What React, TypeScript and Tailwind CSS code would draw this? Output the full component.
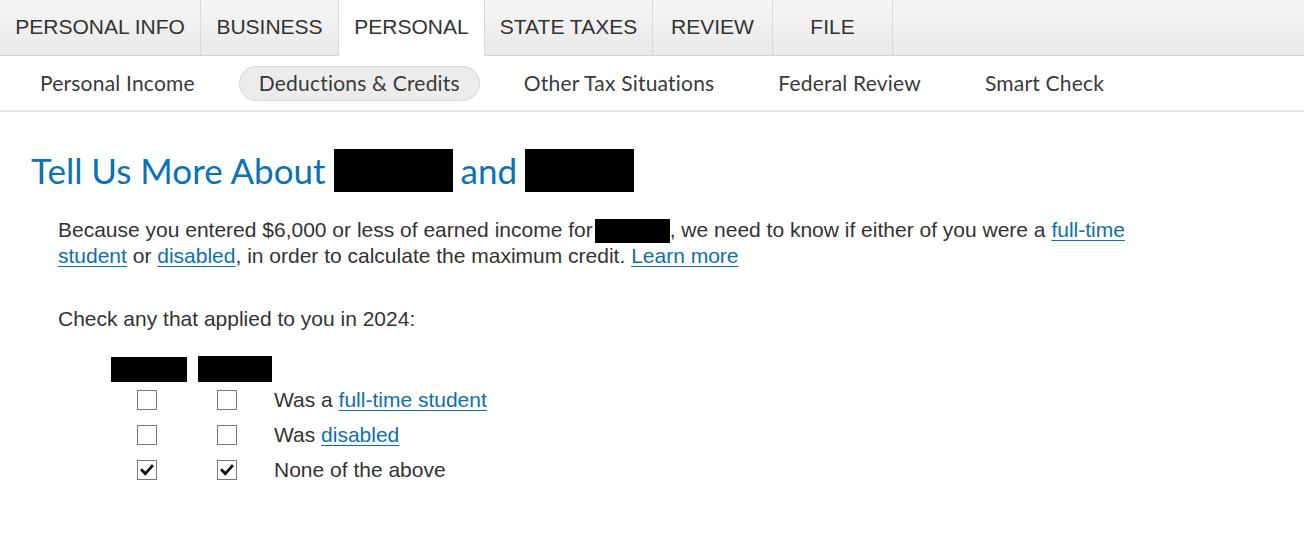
import React from "react";

const tabs = [
  { label: "PERSONAL INFO", w: "w-[201px]", active: false },
  { label: "BUSINESS", w: "w-[138px]", active: false },
  { label: "PERSONAL", w: "w-[146px]", active: true },
  { label: "STATE TAXES", w: "w-[168px]", active: false },
  { label: "REVIEW", w: "w-[120px]", active: false },
  { label: "FILE", w: "w-[120px]", active: false },
];

const subs = ["Personal Income", "Deductions & Credits", "Other Tax Situations", "Federal Review", "Smart Check"];

function Box({ checked }: { checked?: boolean }) {
  return (
    <div className="w-[20px] h-[20px] border border-[#7a7a7a] bg-white flex items-center justify-center">
      {checked && (
        <svg width="16" height="16" viewBox="0 0 16 16">
          <path d="M3 8.3 L6.3 11.6 L13 4.2" fill="none" stroke="#111" strokeWidth="2.8" strokeLinecap="square" />
        </svg>
      )}
    </div>
  );
}

function Link({ children }: { children: React.ReactNode }) {
  return <span className="text-[#0b6fb4] underline underline-offset-[3px] decoration-1">{children}</span>;
}

export default function App() {
  return (
    <div className="w-[1304px] h-[555px] bg-white overflow-hidden" style={{ fontFamily: "'Liberation Sans', Arial, sans-serif" }}>
      <div className="flex h-[56px] border-b border-[#d4d4d4] bg-gradient-to-b from-[#f6f6f6] to-[#e9e9e9]">
        {tabs.map((t) => (
          <div
            key={t.label}
            className={`${t.w} flex items-center justify-center pb-[2px] border-r border-[#d9d9d9] text-[21px] text-[#333] ${t.active ? "bg-white -mb-px" : ""}`}
          >
            {t.label}
          </div>
        ))}
      </div>
      <div className="flex items-center gap-[24px] h-[56px] pl-[20px] border-b-2 border-[#e6e6e6]" style={{ fontFamily: "Lato, 'Noto Sans', sans-serif" }}>
        {subs.map((s, i) => (
          <div
            key={s}
            className={`px-[19px] h-[35px] flex items-center text-[21px] tracking-[0.2px] text-[#3a3a3a] rounded-full ${i === 1 ? "bg-[#ececec] border border-[#d6d6d6]" : "border border-transparent"}`}
          >
            {s}
          </div>
        ))}
      </div>

      <div className="pl-[31px] pt-[32px] flex items-center gap-[8px] text-[#0a72b9] text-[35px]" style={{ fontFamily: "Lato, 'Noto Sans', sans-serif" }}>
        <span>Tell Us More About</span>
        <span className="w-[119px] h-[43px] bg-black inline-block" />
        <span>and</span>
        <span className="w-[109px] h-[43px] bg-black inline-block" />
      </div>

      <div className="pl-[58px] pt-[20px] w-[1150px] text-[21px] leading-[26px] text-[#333]">
        Because you entered $6,000 or less of earned income for
        <span className="inline-block ml-[2px] w-[75px] h-[24px] bg-black align-[-6px]" />, we need to know if either of you were a{" "}
        <Link>full-time student</Link> or <Link>disabled</Link>, in order to calculate the maximum credit.{" "}
        <Link>Learn more</Link>
      </div>

      <div className="pl-[58px] pt-[34px] text-[21px] text-[#333]">Check any that applied to you in 2024:</div>

      <div className="pl-[111px] pt-[22px] text-[21px] text-[#333]">
        <div className="flex items-end">
          <div className="w-[76px] h-[25px] bg-black" />
          <div className="ml-[11px] w-[74px] h-[26px] bg-black" />
        </div>
        <div className="flex flex-col">
          {[
            { label: <>Was a <Link>full-time student</Link></>, checked: false },
            { label: <>Was <Link>disabled</Link></>, checked: false },
            { label: <>None of the above</>, checked: true },
          ].map((r, i) => (
            <div key={i} className="flex items-center h-[35px]">
              <div className="ml-[26px]"><Box checked={r.checked} /></div>
              <div className="ml-[60px]"><Box checked={r.checked} /></div>
              <div className="ml-[37px]">{r.label}</div>
            </div>
          ))}
        </div>
      </div>
    </div>
  );
}
